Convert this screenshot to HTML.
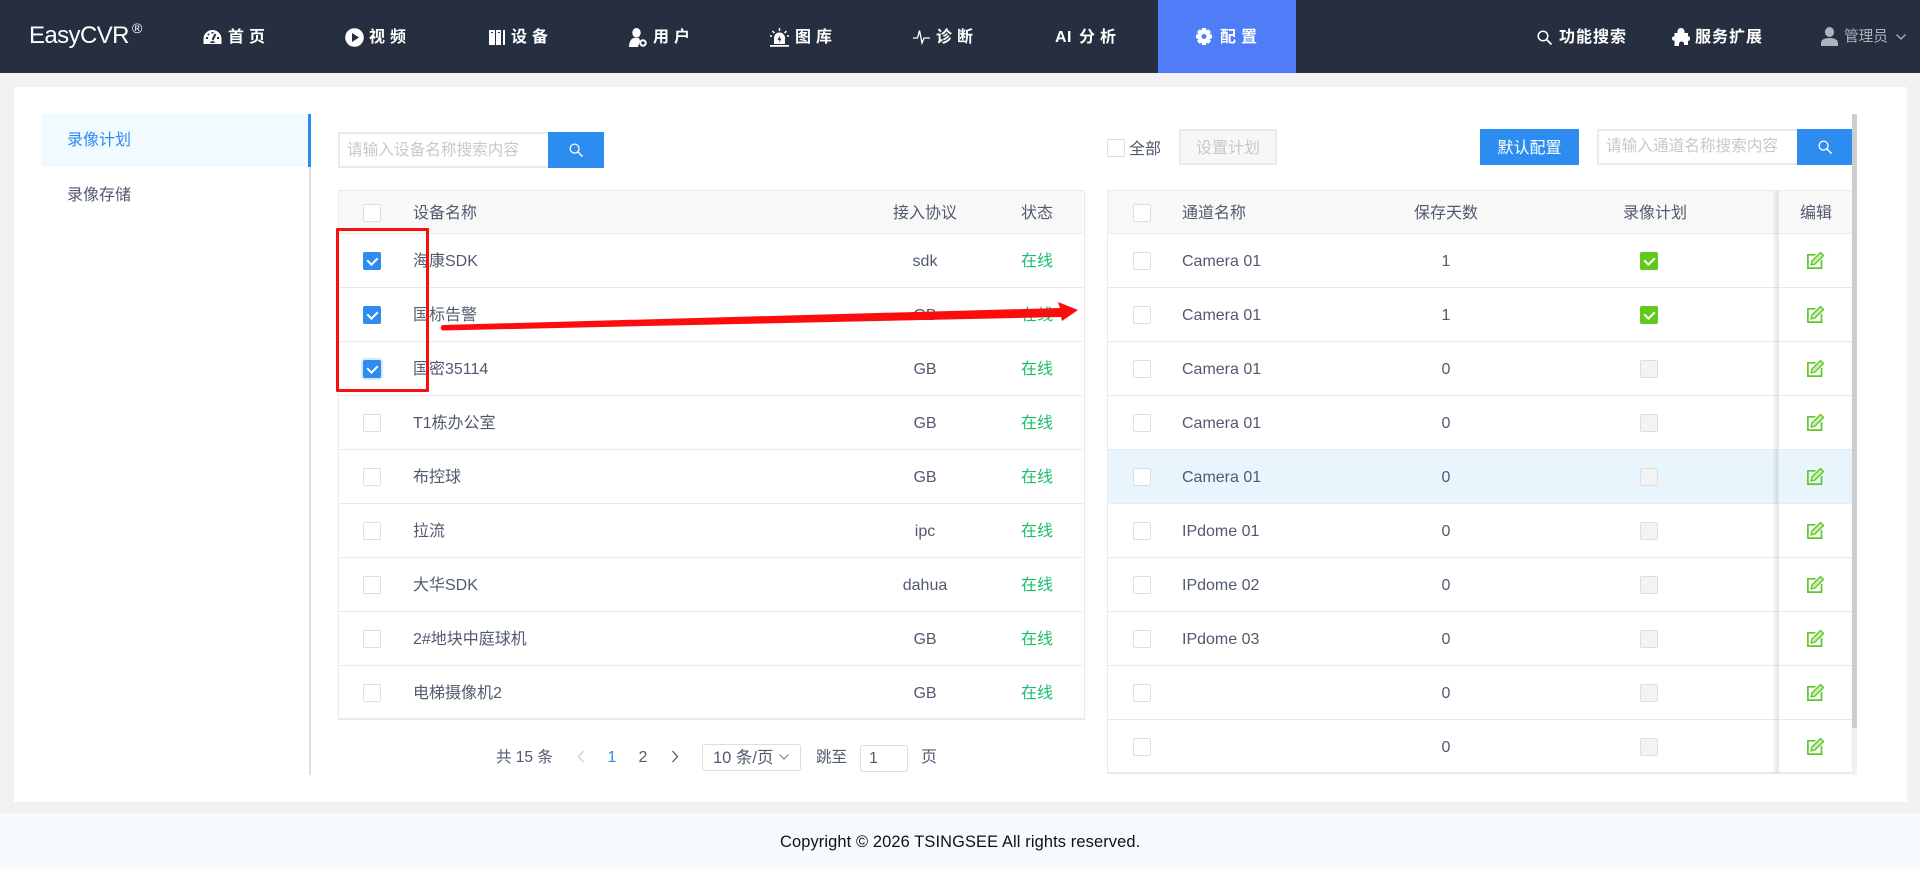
<!DOCTYPE html>
<html lang="zh-CN"><head><meta charset="utf-8"><title>EasyCVR</title>
<style>
*{box-sizing:border-box}
html,body{margin:0;padding:0;width:1920px;height:869px;overflow:hidden;background:#f2f2f2;font-family:"Liberation Sans","Noto Sans CJK SC",sans-serif;font-size:16px;color:#515a6e}
div,span,svg{position:absolute}
.hd{left:0;top:0;width:1920px;height:73px;background:#262f3f}
.nv{top:25px;margin-top:1px;height:24px;line-height:24px;color:#fff;font-weight:700;font-size:16px;letter-spacing:5px;white-space:nowrap}
.nr{top:25px;margin-top:1px;height:24px;line-height:24px;color:#fff;font-weight:700;font-size:16px;letter-spacing:1px;white-space:nowrap}
.tx{white-space:nowrap;line-height:24px;height:24px;margin-top:1px}
.c{transform:translateX(-50%)}
.cb{width:18px;height:18px;border:1px solid #dcdee2;border-radius:2px;background:#fff}
.cb.on{background:#2d8cf0;border-color:#2d8cf0}
.cb.gr{background:#62c81c;border-color:#62c81c}
.cb.dis{background:#f3f3f3;border-color:#dcdee2}
.cb.on:after,.cb.gr:after{content:"";position:absolute;left:5px;top:2px;width:5px;height:8px;border:solid #fff;border-width:0 2px 2px 0;transform:rotate(45deg)}
.ln{height:1px;background:#e8eaec}
.btn{background:#2d8cf0;color:#fff;text-align:center}
.ed{width:18px;height:18px}
.ed .b{fill:none;stroke:#5fc72a;stroke-width:1.700}
.ed .p{fill:#c9eeb0;stroke:#5fc72a;stroke-width:1.400;stroke-linejoin:round}
</style></head><body>

<div class="hd"></div>
<div class="tx" style="left:29px;top:21px;color:#fff;font-size:24px;height:28px;line-height:28px;letter-spacing:-.6px">EasyCVR</div>
<div class="tx" style="left:132px;top:19px;color:#fff;font-size:14px;height:16px;line-height:16px">®</div>

<svg style="left:203px;top:29px" width="19" height="16" viewBox="0 0 19 16"><path fill="#fff" d="M9.500 1A9 9 0 0 0 .5 10v5h18v-5a9 9 0 0 0-9-9z"/><path stroke="#262f3f" stroke-width="2" d="M9.500 11L12.500 5M3 9h2M14 9h2M5 5l1 1M9.500 3v1.500"/><path fill="#262f3f" d="M7 14a2.600 2.600 0 0 1 5 0z"/></svg>
<div class="nv" style="left:228px">首页</div>

<svg style="left:345px;top:28px" width="19" height="19" viewBox="0 0 19 19"><circle cx="9.500" cy="9.500" r="9.300" fill="#fff"/><path fill="#262f3f" d="M7 5l7 4.500L7 14z"/></svg>
<div class="nv" style="left:369px">视频</div>

<svg style="left:489px;top:30px" width="16" height="15" viewBox="0 0 16 15"><path fill="#fff" d="M0 0h6v15H0zM7 0h5v15H7zM14 0h2v15h-2z"/><path fill="#262f3f" d="M2 2h2v1H2zM9 2h2v1H9z"/></svg>
<div class="nv" style="left:511px">设备</div>

<svg style="left:629px;top:28px" width="18" height="19" viewBox="0 0 18 19"><ellipse cx="7.500" cy="4.800" rx="4.200" ry="4.800" fill="#fff"/><path fill="#fff" d="M0 19c0-5 2-8.500 5-9h5l1 2.500-2 6.500z"/><circle cx="14" cy="15" r="2.700" fill="#262f3f" stroke="#fff" stroke-width="2"/></svg>
<div class="nv" style="left:653px">用户</div>

<svg style="left:770px;top:28px" width="19" height="19" viewBox="0 0 19 19"><path fill="#fff" d="M4 16V10a5.500 5.500 0 0 1 11 0v6zM0 17h19v1.800H0z"/><path stroke="#fff" stroke-width="1.500" d="M9.500 0v3M2.500 3l2 2M16.500 3l-2 2M0 8h2M17 8h2"/><path fill="#262f3f" d="M10 7L7.500 12H9.500L9 15l2.500-4.500H9.700z"/></svg>
<div class="nv" style="left:795px">图库</div>

<svg style="left:913px;top:29px" width="17" height="16" viewBox="0 0 17 16"><path fill="none" stroke="#fff" stroke-width="1.300" d="M0 9h4.500L6.500 1.500 9 14l2-5h6"/></svg>
<div class="nv" style="left:936px">诊断</div>

<div class="nv" style="left:1055px;letter-spacing:.5px">AI</div>
<div class="nv" style="left:1079px">分析</div>

<div style="left:1158px;top:0;width:138px;height:73px;background:#4f7cf7"></div>
<svg style="left:1196px;top:28px" width="16" height="17" viewBox="0 0 16 17"><path fill="#fff" fill-rule="evenodd" d="M6 0h4l.5 2.400 2-1.200L15 4l-1.500 2L16 6.800v3.400L13.500 11l1.500 2-2.500 2.800-2-1.200L10 17H6l-.5-2.400-2 1.200L1 13l1.500-2L0 10.200V6.800L2.500 6 1 4l2.500-2.800 2 1.200zM8 6a2.500 2.500 0 1 0 0 5 2.500 2.500 0 0 0 0-5z"/></svg>
<div class="nv" style="left:1220px">配置</div>

<svg style="left:1537px;top:30px" width="15" height="15" viewBox="0 0 15 15"><circle cx="6" cy="6" r="4.800" fill="none" stroke="#fff" stroke-width="1.500"/><path stroke="#fff" stroke-width="1.700" d="M9.500 9.500l5 5"/></svg>
<div class="nr" style="left:1559px">功能搜索</div>

<svg style="left:1672px;top:28px" width="18" height="18" viewBox="0 0 18 18"><path fill="#fff" d="M5.500 5C5 1.500 7 0 9 0s4 1.500 3.500 5H16v3.500c1.500-.5 2 .8 2 2s-.5 2.800-2 2.300V17h-4c.5-2.500-1-3.500-2.500-3.500S6.500 15 7 18H2.500v-5.500C1 13 0 12 0 10.500S1 8 2.500 8.500V5z"/></svg>
<div class="nr" style="left:1695px">服务扩展</div>

<svg style="left:1821px;top:27px" width="17" height="19" viewBox="0 0 17 19"><ellipse cx="8.500" cy="5" rx="4.600" ry="5" fill="#aeb2b9"/><path fill="#aeb2b9" d="M0 19v-3c0-3 3-5 8.500-5s8.500 2 8.500 5v3z"/></svg>
<div class="tx" style="left:1844px;top:24px;color:#aeb2b9;font-size:14.600px">管理员</div>
<svg style="left:1896px;top:33px" width="10" height="8" viewBox="0 0 10 8"><path fill="none" stroke="#aeb2b9" stroke-width="1.300" d="M.5 1.500L5 6l4.500-4.500"/></svg>

<div style="left:14px;top:87px;width:1893px;height:715px;background:#fff"></div>
<div style="left:0;top:813px;width:1920px;height:56px;background:#f6fafd"></div>
<div class="tx" style="left:780px;top:829px;font-size:16.400px;letter-spacing:.13px;color:#111">Copyright © 2026 TSINGSEE All rights reserved.</div>

<div style="left:309px;top:114px;width:2px;height:661px;background:#dcdee2"></div>
<div style="left:41px;top:114px;width:270px;height:53px;background:#f0faff;border-right:3px solid #2d8cf0"></div>
<div class="tx" style="left:67px;top:128px;color:#2d8cf0">录像计划</div>
<div class="tx" style="left:67px;top:183px">录像存储</div>

<div style="left:338px;top:132px;width:211px;height:36px;border:2px solid #eaebee;border-right:0"></div>
<div class="tx" style="left:347px;top:138px;color:#c5c8ce;font-size:15.650px">请输入设备名称搜索内容</div>
<div class="btn" style="left:548px;top:132px;width:56px;height:36px"></div>
<svg style="left:569px;top:143px" width="14" height="14" viewBox="0 0 15 15"><circle cx="6" cy="6" r="4.800" fill="none" stroke="#fff" stroke-width="1.400"/><path stroke="#fff" stroke-width="1.600" d="M9.500 9.500l5 5"/></svg>

<div class="cb" style="left:1107px;top:139px"></div>
<div class="tx" style="left:1129px;top:137px">全部</div>
<div style="left:1179px;top:129px;width:98px;height:36px;background:#f7f7f7;border:2px solid #eaebee;color:#c5c8ce;text-align:center;line-height:36px">设置计划</div>
<div class="btn" style="left:1480px;top:129px;width:99px;height:36px;line-height:40px">默认配置</div>
<div style="left:1597px;top:129px;width:201px;height:36px;border:2px solid #eaebee;border-right:0"></div>
<div class="tx" style="left:1606px;top:134px;color:#c5c8ce;font-size:15.650px">请输入通道名称搜索内容</div>
<div class="btn" style="left:1797px;top:129px;width:56px;height:36px"></div>
<svg style="left:1818px;top:140px" width="14" height="14" viewBox="0 0 15 15"><circle cx="6" cy="6" r="4.800" fill="none" stroke="#fff" stroke-width="1.400"/><path stroke="#fff" stroke-width="1.600" d="M9.500 9.500l5 5"/></svg>

<!-- left table -->
<div style="left:338px;top:190px;width:747px;height:530px;border:2px solid #e8eaec;border-width:1px 1px 2px 1px"></div>
<div style="left:339px;top:191px;width:744px;height:42px;background:#f8f8f9"></div>
<div class="ln" style="left:339px;top:233px;width:744px"></div>
<div class="cb" style="left:363px;top:204px"></div>
<div class="tx" style="left:413px;top:201px">设备名称</div>
<div class="tx c" style="left:925px;top:201px">接入协议</div>
<div class="tx c" style="left:1037px;top:201px">状态</div>

<div class="ln" style="left:339px;top:287px;width:744px"></div>
<div class="ln" style="left:339px;top:341px;width:744px"></div>
<div class="ln" style="left:339px;top:395px;width:744px"></div>
<div class="ln" style="left:339px;top:449px;width:744px"></div>
<div class="ln" style="left:339px;top:503px;width:744px"></div>
<div class="ln" style="left:339px;top:557px;width:744px"></div>
<div class="ln" style="left:339px;top:611px;width:744px"></div>
<div class="ln" style="left:339px;top:665px;width:744px"></div>

<div class="cb on" style="left:363px;top:252px"></div><div class="tx" style="left:413px;top:249px">海康SDK</div><div class="tx c" style="left:925px;top:249px">sdk</div><div class="tx c" style="left:1037px;top:249px;color:#19be6b">在线</div>
<div class="cb on" style="left:363px;top:306px"></div><div class="tx" style="left:413px;top:303px">国标告警</div><div class="tx c" style="left:925px;top:303px">GB</div><div class="tx c" style="left:1037px;top:303px;color:#19be6b">在线</div>
<div style="left:361px;top:358px;width:22px;height:22px;border-radius:4px;background:#d5e8fc"></div>
<div class="cb on" style="left:363px;top:360px"></div><div class="tx" style="left:413px;top:357px">国密35114</div><div class="tx c" style="left:925px;top:357px">GB</div><div class="tx c" style="left:1037px;top:357px;color:#19be6b">在线</div>
<div class="cb" style="left:363px;top:414px"></div><div class="tx" style="left:413px;top:411px">T1栋办公室</div><div class="tx c" style="left:925px;top:411px">GB</div><div class="tx c" style="left:1037px;top:411px;color:#19be6b">在线</div>
<div class="cb" style="left:363px;top:468px"></div><div class="tx" style="left:413px;top:465px">布控球</div><div class="tx c" style="left:925px;top:465px">GB</div><div class="tx c" style="left:1037px;top:465px;color:#19be6b">在线</div>
<div class="cb" style="left:363px;top:522px"></div><div class="tx" style="left:413px;top:519px">拉流</div><div class="tx c" style="left:925px;top:519px">ipc</div><div class="tx c" style="left:1037px;top:519px;color:#19be6b">在线</div>
<div class="cb" style="left:363px;top:576px"></div><div class="tx" style="left:413px;top:573px">大华SDK</div><div class="tx c" style="left:925px;top:573px">dahua</div><div class="tx c" style="left:1037px;top:573px;color:#19be6b">在线</div>
<div class="cb" style="left:363px;top:630px"></div><div class="tx" style="left:413px;top:627px">2#地块中庭球机</div><div class="tx c" style="left:925px;top:627px">GB</div><div class="tx c" style="left:1037px;top:627px;color:#19be6b">在线</div>
<div class="cb" style="left:363px;top:684px"></div><div class="tx" style="left:413px;top:681px">电梯摄像机2</div><div class="tx c" style="left:925px;top:681px">GB</div><div class="tx c" style="left:1037px;top:681px;color:#19be6b">在线</div>

<!-- pagination -->
<div class="tx" style="left:496px;top:745px;font-size:15.500px">共 15 条</div>
<svg style="left:577px;top:750px" width="8" height="13" viewBox="0 0 8 13"><path fill="none" stroke="#c5c8ce" stroke-width="1.300" d="M6.500 1L1.500 6.500 6.500 12"/></svg>
<div class="tx c" style="left:612px;top:745px;color:#2d8cf0">1</div>
<div class="tx c" style="left:643px;top:745px">2</div>
<svg style="left:671px;top:750px" width="8" height="13" viewBox="0 0 8 13"><path fill="none" stroke="#515a6e" stroke-width="1.300" d="M1.500 1l5 5.500-5 5.500"/></svg>
<div style="left:702px;top:744px;width:99px;height:27px;border:1px solid #dcdee2;border-radius:3px"></div>
<div class="tx" style="left:713px;top:745px;font-size:16.500px">10 条/页</div>
<svg style="left:779px;top:753px" width="10" height="8" viewBox="0 0 10 8"><path fill="none" stroke="#808695" stroke-width="1.200" d="M.5 1.500L5 6l4.500-4.500"/></svg>
<div class="tx" style="left:816px;top:745px;font-size:15.500px">跳至</div>
<div style="left:860px;top:745px;width:48px;height:27px;border:1px solid #dcdee2;border-radius:3px"></div>
<div class="tx" style="left:869px;top:746px">1</div>
<div class="tx" style="left:921px;top:745px">页</div>

<!-- right table -->
<div style="left:1107px;top:190px;width:746px;height:584px;border:2px solid #e8eaec;border-width:1px 1px 2px 1px"></div>
<div style="left:1108px;top:191px;width:744px;height:42px;background:#f8f8f9"></div>
<div class="ln" style="left:1108px;top:233px;width:744px"></div>
<div style="left:1108px;top:450px;width:744px;height:54px;background:#e8f5fd"></div>
<div class="ln" style="left:1108px;top:287px;width:744px"></div>
<div class="ln" style="left:1108px;top:341px;width:744px"></div>
<div class="ln" style="left:1108px;top:395px;width:744px"></div>
<div class="ln" style="left:1108px;top:449px;width:744px"></div>
<div class="ln" style="left:1108px;top:503px;width:744px"></div>
<div class="ln" style="left:1108px;top:557px;width:744px"></div>
<div class="ln" style="left:1108px;top:611px;width:744px"></div>
<div class="ln" style="left:1108px;top:665px;width:744px"></div>
<div class="ln" style="left:1108px;top:719px;width:744px"></div>
<div class="cb" style="left:1133px;top:204px"></div>
<div class="tx" style="left:1182px;top:201px">通道名称</div>
<div class="tx c" style="left:1446px;top:201px">保存天数</div>
<div class="tx c" style="left:1655px;top:201px">录像计划</div>

<div class="cb" style="left:1133px;top:252px"></div><div class="tx" style="left:1182px;top:249px">Camera 01</div><div class="tx c" style="left:1446px;top:249px">1</div><div class="cb gr" style="left:1640px;top:252px"></div>
<div class="cb" style="left:1133px;top:306px"></div><div class="tx" style="left:1182px;top:303px">Camera 01</div><div class="tx c" style="left:1446px;top:303px">1</div><div class="cb gr" style="left:1640px;top:306px"></div>
<div class="cb" style="left:1133px;top:360px"></div><div class="tx" style="left:1182px;top:357px">Camera 01</div><div class="tx c" style="left:1446px;top:357px">0</div><div class="cb dis" style="left:1640px;top:360px"></div>
<div class="cb" style="left:1133px;top:414px"></div><div class="tx" style="left:1182px;top:411px">Camera 01</div><div class="tx c" style="left:1446px;top:411px">0</div><div class="cb dis" style="left:1640px;top:414px"></div>
<div class="cb" style="left:1133px;top:468px"></div><div class="tx" style="left:1182px;top:465px">Camera 01</div><div class="tx c" style="left:1446px;top:465px">0</div><div class="cb dis" style="left:1640px;top:468px"></div>
<div class="cb" style="left:1133px;top:522px"></div><div class="tx" style="left:1182px;top:519px">IPdome 01</div><div class="tx c" style="left:1446px;top:519px">0</div><div class="cb dis" style="left:1640px;top:522px"></div>
<div class="cb" style="left:1133px;top:576px"></div><div class="tx" style="left:1182px;top:573px">IPdome 02</div><div class="tx c" style="left:1446px;top:573px">0</div><div class="cb dis" style="left:1640px;top:576px"></div>
<div class="cb" style="left:1133px;top:630px"></div><div class="tx" style="left:1182px;top:627px">IPdome 03</div><div class="tx c" style="left:1446px;top:627px">0</div><div class="cb dis" style="left:1640px;top:630px"></div>
<div class="cb" style="left:1133px;top:684px"></div><div class="tx c" style="left:1446px;top:681px">0</div><div class="cb dis" style="left:1640px;top:684px"></div>
<div class="cb" style="left:1133px;top:738px"></div><div class="tx c" style="left:1446px;top:735px">0</div><div class="cb dis" style="left:1640px;top:738px"></div>

<!-- fixed edit column shadow & separator -->
<div style="left:1772px;top:191px;width:6px;height:582px;background:linear-gradient(to right,rgba(0,0,0,0),rgba(0,0,0,.1))"></div>
<div style="left:1778px;top:191px;width:1px;height:582px;background:#e8eaec"></div>
<div class="tx c" style="left:1816px;top:201px">编辑</div>

<svg class="ed" style="left:1807px;top:251px" viewBox="0 0 18 18"><path class="b" d="M8.500 3.800H.9v13.300h13.600V9"/><path class="p" d="M4 14l1-4 8.500-8.500 3 3L8 13z"/></svg>
<svg class="ed" style="left:1807px;top:305px" viewBox="0 0 18 18"><path class="b" d="M8.500 3.800H.9v13.300h13.600V9"/><path class="p" d="M4 14l1-4 8.500-8.500 3 3L8 13z"/></svg>
<svg class="ed" style="left:1807px;top:359px" viewBox="0 0 18 18"><path class="b" d="M8.500 3.800H.9v13.300h13.600V9"/><path class="p" d="M4 14l1-4 8.500-8.500 3 3L8 13z"/></svg>
<svg class="ed" style="left:1807px;top:413px" viewBox="0 0 18 18"><path class="b" d="M8.500 3.800H.9v13.300h13.600V9"/><path class="p" d="M4 14l1-4 8.500-8.500 3 3L8 13z"/></svg>
<svg class="ed" style="left:1807px;top:467px" viewBox="0 0 18 18"><path class="b" d="M8.500 3.800H.9v13.300h13.600V9"/><path class="p" d="M4 14l1-4 8.500-8.500 3 3L8 13z"/></svg>
<svg class="ed" style="left:1807px;top:521px" viewBox="0 0 18 18"><path class="b" d="M8.500 3.800H.9v13.300h13.600V9"/><path class="p" d="M4 14l1-4 8.500-8.500 3 3L8 13z"/></svg>
<svg class="ed" style="left:1807px;top:575px" viewBox="0 0 18 18"><path class="b" d="M8.500 3.800H.9v13.300h13.600V9"/><path class="p" d="M4 14l1-4 8.500-8.500 3 3L8 13z"/></svg>
<svg class="ed" style="left:1807px;top:629px" viewBox="0 0 18 18"><path class="b" d="M8.500 3.800H.9v13.300h13.600V9"/><path class="p" d="M4 14l1-4 8.500-8.500 3 3L8 13z"/></svg>
<svg class="ed" style="left:1807px;top:683px" viewBox="0 0 18 18"><path class="b" d="M8.500 3.800H.9v13.300h13.600V9"/><path class="p" d="M4 14l1-4 8.500-8.500 3 3L8 13z"/></svg>
<svg class="ed" style="left:1807px;top:737px" viewBox="0 0 18 18"><path class="b" d="M8.500 3.800H.9v13.300h13.600V9"/><path class="p" d="M4 14l1-4 8.500-8.500 3 3L8 13z"/></svg>

<!-- scrollbar -->
<div style="left:1853px;top:114px;width:4px;height:661px;background:#f1f1f1"></div>
<div style="left:1852px;top:114px;width:5px;height:614px;background:#cdcdcd"></div>

<!-- annotations -->
<div style="left:336px;top:228px;width:93px;height:164px;border:3px solid #f60f0f;border-radius:1px"></div>
<svg style="left:0;top:0" width="1920" height="869" viewBox="0 0 1920 869"><path fill="#fb0d0d" d="M443 325L1060 308l-2-6 20 8-16 11-1-4L443 330.500a2.800 2.800 0 0 1 0-5.500z"/></svg>
</body></html>
